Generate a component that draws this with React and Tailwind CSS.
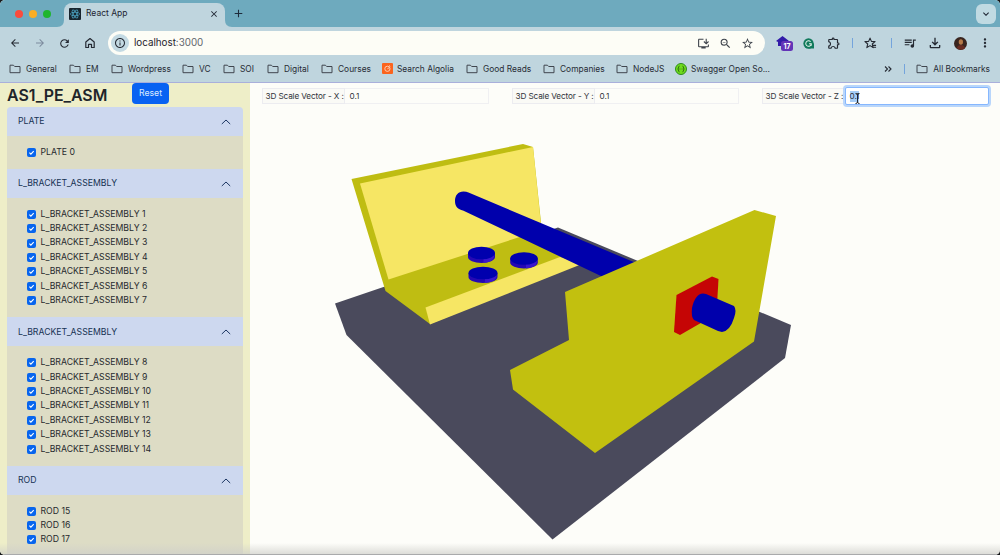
import React from "react";
import { MdStarOutline, MdQueueMusic, MdOutlineFileDownload, MdInfoOutline, MdArrowBack, MdArrowForward, MdRefresh, MdInstallDesktop, MdZoomOut, MdOutlineExtension, MdMoreVert, MdClose, MdAdd, MdExpandMore } from "react-icons/md";

const bookmarks = [
  { label: "General", w: "w-[60px]" },
  { label: "EM", w: "w-[42px]" },
  { label: "Wordpress", w: "w-[71px]" },
  { label: "VC", w: "w-[41px]" },
  { label: "SOI", w: "w-[44px]" },
  { label: "Digital", w: "w-[54px]" },
  { label: "Courses", w: "w-[61px]" },
  { label: "Search Algolia", w: "w-[84px]", icon: "algolia" },
  { label: "Good Reads", w: "w-[77px]" },
  { label: "Companies", w: "w-[73px]" },
  { label: "NodeJS", w: "w-[59px]" },
  { label: "Swagger Open So...", w: "w-[110px]", icon: "swagger" },
];

const groups = [
  { title: "PLATE", items: ["PLATE 0"] },
  { title: "L_BRACKET_ASSEMBLY", items: [1, 2, 3, 4, 5, 6, 7].map((n) => `L_BRACKET_ASSEMBLY ${n}`) },
  { title: "L_BRACKET_ASSEMBLY", items: [8, 9, 10, 11, 12, 13, 14].map((n) => `L_BRACKET_ASSEMBLY ${n}`) },
  { title: "ROD", items: ["ROD 15", "ROD 16", "ROD 17"] },
];

function Folder() {
  return (
    <svg viewBox="0 0 12 10" className="h-[10px] w-3 shrink-0" fill="none" stroke="#40464f" strokeWidth="1">
      <path d="M1 1.2h3.4l1.3 1.3H11v6.2H1z" strokeLinejoin="round" />
    </svg>
  );
}

function BookmarkIcon({ kind }) {
  if (kind === "algolia")
    return (
      <svg viewBox="0 0 11 11" className="size-[11px] shrink-0">
        <rect width="11" height="11" rx="1" fill="#fb641e" />
        <circle cx="5.4" cy="5.8" r="2.6" fill="none" stroke="#ffd6bd" strokeWidth=".9" />
        <path d="M5.4 5.8 7 4.8M7 2.5l1.3 1" stroke="#ffd6bd" strokeWidth=".9" />
      </svg>
    );
  if (kind === "swagger")
    return (
      <svg viewBox="0 0 12 12" className="size-3 shrink-0">
        <circle cx="6" cy="6" r="5.5" fill="#6fdc1c" stroke="#2f8c1d" />
        <path d="M4.4 3.2c-1.2 0-.5 2-1.6 2.8 1.1.8.4 2.8 1.6 2.8M7.6 3.2c1.2 0 .5 2 1.6 2.8-1.1.8-.4 2.8-1.6 2.8M4.6 6h.7M6.7 6h.7" fill="none" stroke="#1d4a12" strokeWidth=".9" />
      </svg>
    );
  return <Folder />;
}

function Slot({ w, children }) {
  return <div className={`${w} flex shrink-0 items-center justify-center`}>{children}</div>;
}

function TabBar() {
  return (
    <div className="flex h-[27px] items-end bg-[#6eaabe]">
      <div className="flex h-[27px] w-[57px] shrink-0 items-center gap-[6px] pl-[15px]">
        <i className="size-2 rounded-full bg-[#fb4b3c]" />
        <i className="size-2 rounded-full bg-[#fbae25]" />
        <i className="size-2 rounded-full bg-[#1fb52f]" />
      </div>
      <svg viewBox="0 0 7 7" className="h-[7px] w-[7px] shrink-0 fill-[#bfd5de]"><path d="M7 0v7H0Q7 7 7 0" /></svg>
      <div className="flex h-6 w-[161px] shrink-0 items-center rounded-t-[8px] bg-[#bfd5de] pb-[3px] pl-[5px] pr-[6px]">
        <svg viewBox="0 0 12 12" className="size-3">
          <rect width="12" height="12" rx="1" fill="#18252e" />
          <g fill="none" stroke="#4fa9c9" strokeWidth=".7">
            <ellipse cx="6" cy="6" rx="4.7" ry="1.8" />
            <ellipse cx="6" cy="6" rx="4.7" ry="1.8" transform="rotate(60 6 6)" />
            <ellipse cx="6" cy="6" rx="4.7" ry="1.8" transform="rotate(120 6 6)" />
          </g>
        </svg>
        <span className="ml-[5px] text-[8.5px] text-[#1d2430]">React App</span>
        <MdClose className="ml-auto size-[10px] text-[#1d2430]" />
      </div>
      <svg viewBox="0 0 7 7" className="h-[7px] w-[7px] shrink-0 fill-[#bfd5de]"><path d="M0 0v7h7Q0 7 0 0" /></svg>
      <div className="flex h-[27px] items-center"><MdAdd className="size-[13px] text-[#1d2b3b]" /></div>
      <div className="ml-auto mr-1 flex size-5 items-center justify-center self-center rounded-md bg-[#c0dae2]">
        <MdExpandMore className="size-[12px] text-[#1d2430]" />
      </div>
    </div>
  );
}

function Toolbar() {
  return (
    <div className="flex h-[32px] items-center bg-[#bfd5de] pl-[2px] text-[#252a33]">
      <Slot w="w-[25px]"><MdArrowBack className="size-3" /></Slot>
      <Slot w="w-[25px]"><MdArrowForward className="size-3 text-[#7d8b9e]" /></Slot>
      <Slot w="w-[25px]"><MdRefresh className="size-[13px]" /></Slot>
      <Slot w="w-[25px]">
        <svg viewBox="0 0 12 12" className="size-3" fill="none" stroke="currentColor" strokeWidth="1.2" strokeLinejoin="round">
          <path d="M1.8 5 6 1.5 10.200 5v5.500H7.500V7.300h-3v3.200H1.800z" />
        </svg>
      </Slot>
      <div className="ml-[6px] flex h-6 w-[657px] shrink-0 items-center rounded-full bg-[#fdfdf6] pl-[3px] pr-[7px]">
        <div className="flex size-[18px] items-center justify-center rounded-full bg-[#c4dae3]"><MdInfoOutline className="size-3" /></div>
        <span className="ml-[5px] text-[9.8px] text-[#1d222b]">localhost<span className="text-[#62666d]">:3000</span></span>
        <div className="ml-auto flex text-[#3d424a]">
          <Slot w="w-[22px]"><MdInstallDesktop className="size-[13px]" /></Slot>
          <Slot w="w-[22px]"><MdZoomOut className="size-[13px]" /></Slot>
          <Slot w="w-[22px]"><MdStarOutline className="size-[13px]" /></Slot>
        </div>
      </div>
      <div className="ml-[11px] w-[20px] shrink-0">
        <svg viewBox="0 0 18 17" className="h-[17px] w-[18px]">
          <path d="M0 6 6.5 1 13 6l-2 1v4H2V7z" fill="#321ba8" />
          <rect x="5" y="6" width="12" height="10" rx="2.5" fill="#6334b7" />
          <text x="11" y="13.6" fontSize="7" fontWeight="700" fill="#fff" textAnchor="middle">17</text>
        </svg>
      </div>
      <Slot w="w-[24px]">
        <svg viewBox="0 0 12 12" className="size-[11px]">
          <path d="M6 6h6v5.500H6z" fill="#117a5c" />
          <circle cx="6" cy="6" r="5.600" fill="#117a5c" />
          <path d="M8.3 4.1A3 3 0 1 0 9 6.2H6.6M9 6v2.400" fill="none" stroke="#e5f5ee" strokeWidth="1.1" />
        </svg>
      </Slot>
      <Slot w="w-[27px]"><MdOutlineExtension className="size-[14px]" /></Slot>
      <Slot w="w-[10px]"><i className="h-[10px] w-px bg-[#74a4dc]" /></Slot>
      <Slot w="w-[27px]">
        <svg viewBox="0 0 14 14" className="size-[13px]" fill="none" stroke="currentColor" strokeWidth="1.2" strokeLinejoin="round">
          <path d="m6.5 1.2 1.5 3.5 3.9.3-3 2.5.9 3.9-3.3-2.1-3.4 2.1.9-3.9-3-2.5L5 4.7z" />
          <path d="M9 9h4M9.3 11h3.7" />
        </svg>
      </Slot>
      <Slot w="w-[14px]"><i className="h-[10px] w-px bg-[#74a4dc]" /></Slot>
      <Slot w="w-[24px]"><MdQueueMusic className="size-[14px]" /></Slot>
      <Slot w="w-[26px]"><MdOutlineFileDownload className="size-[16px]" /></Slot>
      <Slot w="w-[24px]">
        <svg viewBox="0 0 14 14" className="size-[13px]">
          <circle cx="7" cy="7" r="7" fill="#39251f" />
          <ellipse cx="7.4" cy="5.4" rx="2.3" ry="3" fill="#b77a49" />
          <path d="M3 12q1-3.5 4.4-3.5T12 12q-4 3.5-9 0" fill="#692c22" />
        </svg>
      </Slot>
      <Slot w="w-[26px]"><MdMoreVert className="size-[14px]" /></Slot>
    </div>
  );
}

function Bookmarks() {
  return (
    <div className="flex h-[24px] items-center border-b border-[#a9afdb] bg-[#bfd5de] pb-[6px] pl-[9px] pt-[3px] text-[8.4px] text-[#272c35]">
      {bookmarks.map((b) => (
        <div key={b.label} className={`${b.w} flex shrink-0 items-center ${b.icon ? "gap-1" : "gap-[5px]"}`}>
          <BookmarkIcon kind={b.icon} />
          <span>{b.label}</span>
        </div>
      ))}
      <svg viewBox="0 0 8 8" className="ml-auto size-2" fill="none" stroke="#272c35" strokeWidth="1.1"><path d="m1 1.5 2.5 2.5L1 6.5M4.5 1.5 7 4 4.5 6.500" /></svg>
      <i className="ml-[12px] h-[10px] w-px bg-[#74a4dc]" />
      <div className="ml-[11px] mr-[10px] flex items-center gap-[5px]"><Folder /><span>All Bookmarks</span></div>
    </div>
  );
}

function Sidebar() {
  return (
    <aside className="h-[472px] w-[250px] shrink-0 overflow-hidden bg-[#eeeec8] px-[7px] text-[8.7px]">
      <div className="flex h-6 items-start">
        <h1 className="w-[125px] pt-[3px] text-[15.9px] font-semibold leading-[19px] text-[#20242a]">AS1_PE_ASM</h1>
        <button className="h-[21px] w-[37px] rounded-[4px] bg-[#0862f2] pt-px text-[8.7px] text-[#dbeaff]">Reset</button>
      </div>
      <div className="overflow-hidden rounded-t-[4px]">
        {groups.map((g, i) => (
          <section key={i}>
            <div className="flex h-[29px] items-center justify-between bg-[#cdd8ef] pl-[11px] pr-[12px] pt-px text-[#173353]">
              <span>{g.title}</span>
              <svg viewBox="0 0 10 6" className="h-[6px] w-[10px]" fill="none" stroke="#1d3763" strokeWidth="1"><path d="m.8 5 4.2-4 4.2 4" /></svg>
            </div>
            <div className="bg-[#dddcc5] pb-[9.3px] pl-5 pt-[9.1px]">
              {g.items.map((t) => (
                <div key={t} className="flex h-[14.45px] items-center gap-[4.5px] text-[#272a2e]">
                  <svg viewBox="0 0 9 9" className="size-[9px]"><rect width="9" height="9" rx="2" fill="#0765ee" /><path d="m2.4 4.6 1.5 1.5 2.8-3" fill="none" stroke="#fff" strokeWidth="1.1" /></svg>
                  <span>{t}</span>
                </div>
              ))}
            </div>
          </section>
        ))}
      </div>
    </aside>
  );
}

function ScaleField({ axis, active }) {
  return (
    <div className="flex h-4 text-[8.2px] text-[#30343a]">
      <div className="flex w-[83px] shrink-0 items-center border border-[#ececf0] bg-[#fafaf6] pl-[3px] pt-px tracking-[-0.13px]">3D Scale Vector - {axis} :</div>
      {active ? (
        <div className="-my-px flex flex-1 items-center rounded-[2px] border border-[#86b7fe] bg-white pl-[4px] ring-2 ring-[#b9d6fb]">
          <span className="bg-[#a6cdf6] leading-[11px]">0.1</span>
          <svg viewBox="0 0 5 11" className="-ml-1 mt-1 h-[11px] w-[5px] shrink-0" fill="none" stroke="#22262c"><path d="M.5.5q2 0 2 1.5v7q0 1.500-2 1.500M4.500.5q-2 0-2 1.500v7q0 1.500 2 1.500" /></svg>
        </div>
      ) : (
        <div className="flex flex-1 items-center border border-l-0 border-[#f0f0f2] pl-[5px] pt-px">0.1</div>
      )}
    </div>
  );
}

function Nut({ x, y, r }) {
  return (
    <g>
      <path d={`M${x - r} ${y}v4a${r} 6 0 0 0 ${2 * r} 0v-4z`} fill="#2508b4" />
      <path d={`M${x + 2} ${y + 5}v5q${r - 4}-1 ${r - 3}-6v-4z`} fill="#3a16cc" />
      <ellipse cx={x} cy={y} rx={r} ry="6.300" fill="#0000ae" />
    </g>
  );
}

function Model() {
  return (
    <svg viewBox="250 109 750 446" className="block h-[446px] w-[750px]">
      <path d="M335 303.500 558 227.500 791 325 785 358 552.500 539.500 346.500 335z" fill="#4a4a5c" />
      <path d="M351.500 179 523 144 533 147 542 232 579 263 430 324 385.500 291z" fill="#bfbd12" />
      <path d="M360 183.500 533 147 541.500 230 388.500 279.500z" fill="#f6e664" />
      <path d="M425.500 307.500 560 257 582 264 430 324.500z" fill="#f6e664" />
      <Nut x={481.500} y={253} r={13.500} />
      <Nut x={524} y={258.500} r={13.800} />
      <Nut x={483} y={273} r={14.500} />
      <path d="M463.500 191.500q3 0 5 1L636 263 602 276.500 463 210.500c-5-1-8-4-8-9.500s3-9.500 8.500-9.500" fill="#0000ac" />
      <path d="M565 292 754.500 210 776 216 754 341.500 595 453 513 389.500 510 370 569 340z" fill="#c2c00f" />
      <path d="m676.500 295 35.500-18.500 6.500 2.500-2 35-36.500 21-6-3z" fill="#c50505" />
      <path d="m706 294 28 12q3 4 0 12-4 13-12 14l-4-1-24-11q-3-3-2-12 3-14 11-14.500z" fill="#0000ac" />
    </svg>
  );
}

export default function App() {
  return (
    <div className="h-[555px] w-[1000px] overflow-hidden whitespace-nowrap bg-[#17191b] font-['Inter','Liberation_Sans',sans-serif]">
      <div className="relative h-full overflow-hidden rounded-[5px] bg-[#fdfdf9]">
        <TabBar />
        <Toolbar />
        <Bookmarks />
        <div className="flex">
          <Sidebar />
          <main className="w-[750px]">
            <div className="grid h-[26px] grid-cols-3 pt-[5px] *:mx-[11.500px]">
              <ScaleField axis="X" />
              <ScaleField axis="Y" />
              <ScaleField axis="Z" active />
            </div>
            <Model />
          </main>
        </div>
        <div className="absolute inset-x-0 bottom-0 h-3 border-b border-[#a9aaab] bg-linear-to-b from-transparent to-[#cfcfca]/70" />
      </div>
    </div>
  );
}
